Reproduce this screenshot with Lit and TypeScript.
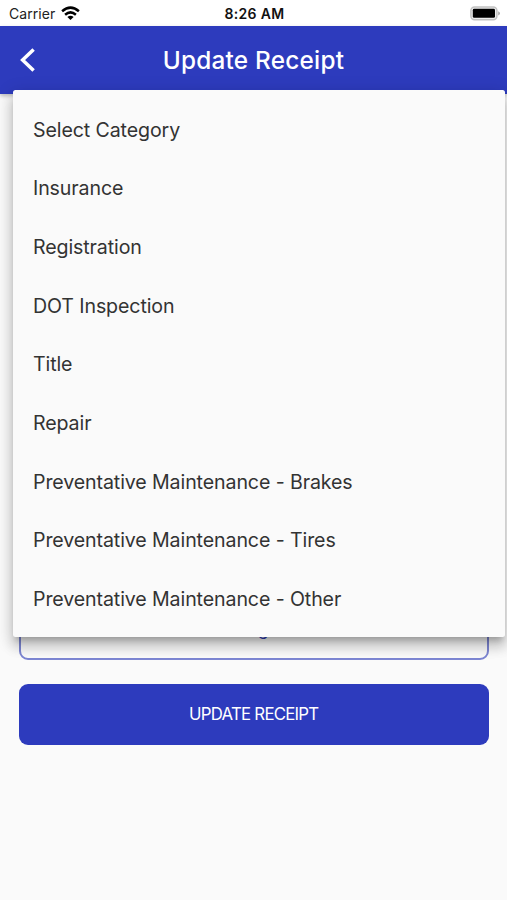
import { LitElement, html, css } from "lit";
import { customElement } from "lit/decorators.js";

const CATEGORIES = [
  "Select Category",
  "Insurance",
  "Registration",
  "DOT Inspection",
  "Title",
  "Repair",
  "Preventative Maintenance - Brakes",
  "Preventative Maintenance - Tires",
  "Preventative Maintenance - Other",
];

@customElement("status-bar")
class StatusBar extends LitElement {
  static styles = css`
    :host {
      display: grid;
      grid-template-columns: 1fr auto 1fr;
      align-items: center;
      height: 25.5px;
      padding: 2px 7px 0 9px;
      box-sizing: border-box;
      background: #fff;
      color: #111;
      font-size: 14px;
      line-height: 23px;
    }
    .carrier { display: flex; align-items: center; gap: 6px; color: #222; letter-spacing: 0.05px; }
    .time { font-size: 14px; font-weight: 600; letter-spacing: 0.35px; }
    .battery { justify-self: end; display: block; margin-bottom: 1px; }
    svg { display: block; }
  `;
  render() {
    return html`
      <div class="carrier">
        <span>Carrier</span>
        <svg class="wifi" width="19" height="15" viewBox="0 0 19 15">
          <g fill="none" stroke="#000" stroke-width="2.5">
            <path d="M1.1 5.2Q9.5 -1.9 17.9 5.2" />
            <path d="M4.1 8.7Q9.5 4.1 14.9 8.7" />
          </g>
          <path d="M6.4 11Q9.5 8.5 12.6 11L9.5 14z" fill="#000" />
        </svg>
      </div>
      <span class="time">8:26 AM</span>
      <svg class="battery" width="30" height="15" viewBox="0 0 30 15">
        <rect x="0.9" y="0.9" width="26" height="12.8" rx="3.6" fill="#eee" stroke="#c2c2c2" stroke-width="1.5" />
        <rect x="2.8" y="2.8" width="22.2" height="9" rx="1.4" fill="#000" />
        <path d="M28.2 5.2Q30 6 30 7.3T28.2 9.4z" fill="#aaa" />
      </svg>
    `;
  }
}

@customElement("app-header")
class AppHeader extends LitElement {
  static styles = css`
    :host {
      display: grid;
      grid-template-columns: 60px 1fr 60px;
      align-items: center;
      height: 68px;
      background: #2d3bbd;
      color: #fff;
      box-shadow: 0 2px 4px rgba(0, 0, 0, 0.25);
    }
    .back { display: block; margin-left: 19px; }
    .title { text-align: center; font-size: 24.3px; font-weight: 500; white-space: nowrap; letter-spacing: 0.25px; }
  `;
  render() {
    return html`
      <svg class="back" width="18" height="26" viewBox="0 0 18 26">
        <path d="M14.6 2.4L3.6 13L14.6 23.6" fill="none" stroke="#fff" stroke-width="3.5" />
      </svg>
      <span class="title">Update Receipt</span>
    `;
  }
}

@customElement("category-menu")
class CategoryMenu extends LitElement {
  static styles = css`
    :host {
      display: block;
      box-sizing: border-box;
      padding: 10.2px 0 8.8px;
      background: #fafafa;
      border-radius: 2.5px;
      color: #333;
      box-shadow: 0 6px 6px -3px rgba(0, 0, 0, 0.2), 0 10px 12px 1px rgba(0, 0, 0, 0.14),
        0 4px 17px 2px rgba(0, 0, 0, 0.14);
    }
    .item {
      display: flex;
      align-items: center;
      height: 58.68px;
      padding: 0 20px;
      font-size: 19.6px;
      white-space: nowrap;
      letter-spacing: -0.11px;
    }
  `;
  render() {
    return CATEGORIES.map((name) => html`<div class="item"><span>${name}</span></div>`);
  }
}

@customElement("app-root")
class AppRoot extends LitElement {
  static styles = css`
    :host {
      display: flex;
      flex-direction: column;
      position: relative;
      height: 900px;
      overflow: hidden;
      background: #fafafa;
      font-family: Inter, "Liberation Sans", sans-serif;
    }
    .actions {
      display: flex;
      flex-direction: column;
      gap: 24px;
      margin-top: auto;
      padding: 0 18.5px 155.5px 19px;
    }
    .button {
      display: flex;
      align-items: center;
      justify-content: center;
      box-sizing: border-box;
      height: 61px;
      border-radius: 9px;
      font-size: 17px;
    }
    .outlined { color: #2d3bbd; border: 2px solid #7c85d2; }
    .filled { background: #2d3bbd; color: #fff; }
    .label { font-size: 16.8px; letter-spacing: -0.75px; }
    .menu { position: absolute; left: 13px; right: 2.5px; top: 90px; }
  `;
  render() {
    return html`
      <status-bar></status-bar>
      <app-header></app-header>
      <div class="actions">
        <div class="button outlined"><span>Image</span></div>
        <div class="button filled"><span class="label">UPDATE RECEIPT</span></div>
      </div>
      <category-menu class="menu"></category-menu>
    `;
  }
}
